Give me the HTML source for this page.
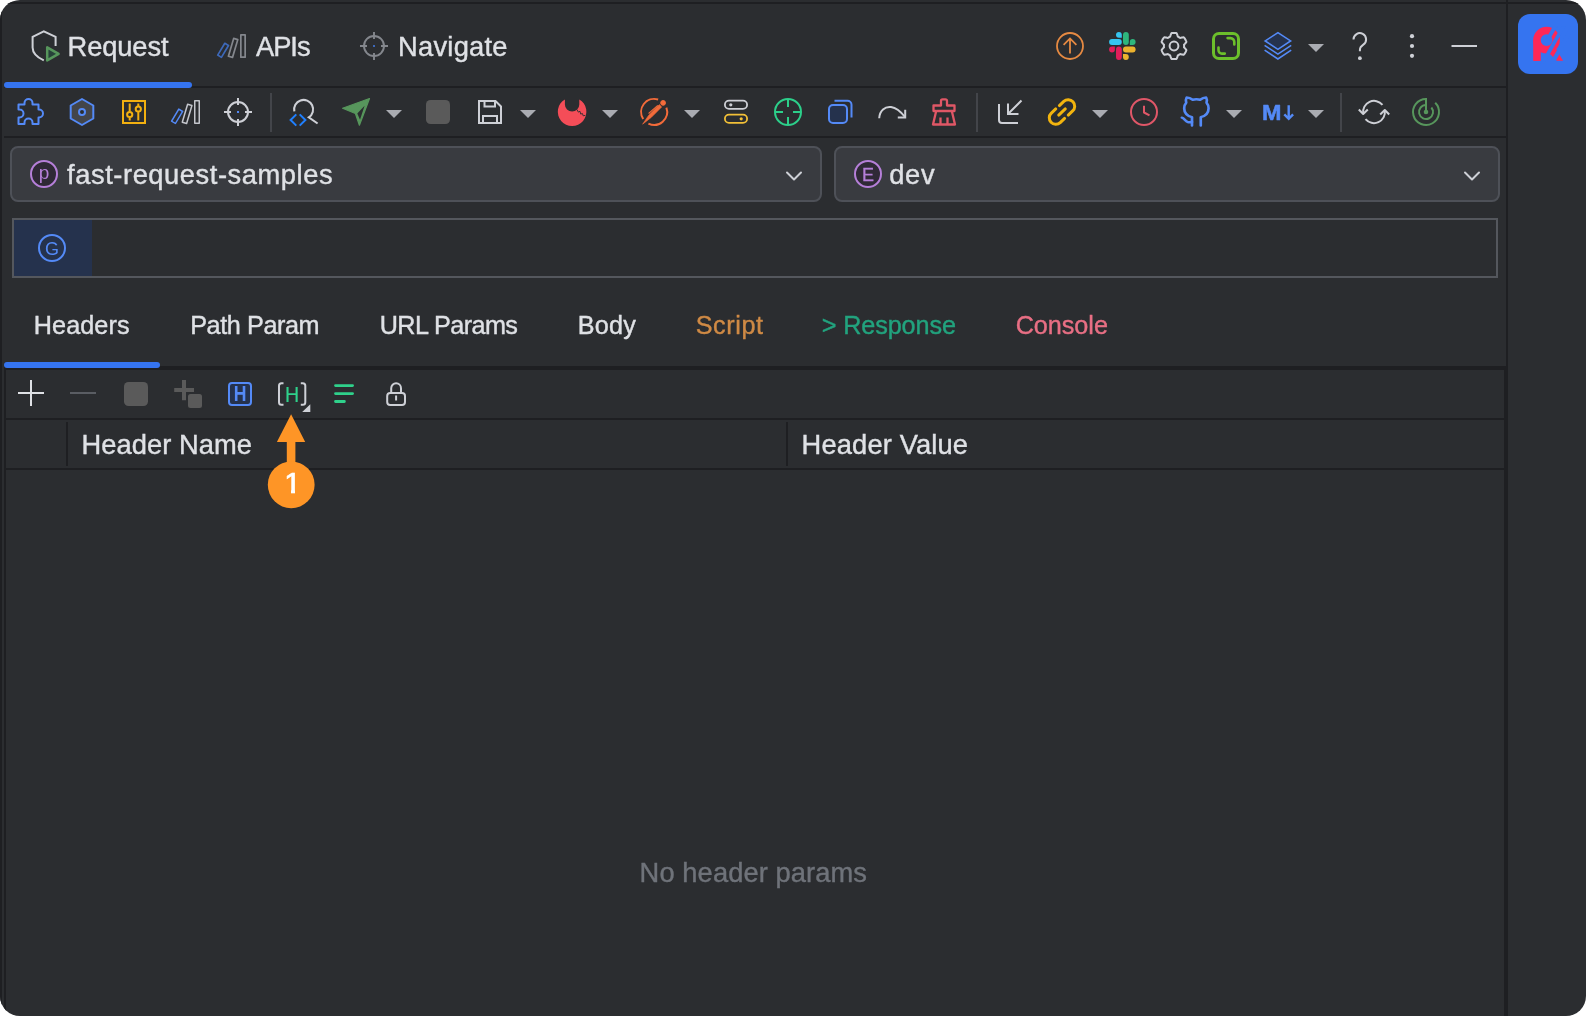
<!DOCTYPE html>
<html><head><meta charset="utf-8"><title>Fast Request</title>
<style>
html,body{margin:0;padding:0;background:#fff;}
body{width:1586px;height:1016px;overflow:hidden;position:relative;font-family:"Liberation Sans",sans-serif;}
#win{position:absolute;left:0;top:0;width:1586px;height:1016px;background:#2b2d30;border-radius:20px;overflow:hidden;}
.abs{position:absolute;}
.dk{position:absolute;background:#1e1f22;}
.t{position:absolute;white-space:nowrap;color:#dfe1e5;line-height:1;-webkit-text-stroke:0.4px currentColor;}
#txt{position:absolute;left:0;top:0;width:1586px;height:1016px;will-change:transform;}
.ic{position:absolute;width:32px;height:32px;overflow:visible;}
.dd{position:absolute;background:#393b40;border:2px solid #4e5158;border-radius:8px;box-sizing:border-box;}
svg{display:block;will-change:transform}
</style></head><body>

<div id="win">
<div class="dk" style="left:0;top:2px;width:1586px;height:2px"></div>
<div class="dk" style="left:0;top:0;width:2px;height:1016px"></div>
<div class="dk" style="left:1506px;top:0;width:2px;height:1016px"></div>
<div class="dk" style="left:4px;top:86px;width:1502px;height:2px"></div>
<div class="abs" style="left:4px;top:82px;width:188px;height:6px;border-radius:3px;background:#3574f0"></div>
<div class="dk" style="left:4px;top:136px;width:1502px;height:2px"></div>
<div class="dk" style="left:4px;top:366px;width:1502px;height:4px"></div>
<div class="abs" style="left:4px;top:362px;width:156px;height:6px;border-radius:3px;background:#3574f0"></div>
<div class="dk" style="left:4px;top:368px;width:2px;height:648px"></div>
<div class="dk" style="left:1504px;top:368px;width:2px;height:648px"></div>
<div class="dk" style="left:6px;top:418px;width:1498px;height:2px"></div>
<div class="dk" style="left:6px;top:468px;width:1498px;height:2px"></div>
<div class="dk" style="left:66px;top:422px;width:2px;height:44px"></div>
<div class="dk" style="left:786px;top:422px;width:2px;height:44px"></div>

<!-- topicons -->
<svg class="abs" style="left:0;top:0" width="1508" height="86" viewBox="0 0 1508 86" fill="none" stroke-linecap="round" stroke-linejoin="round">
<!-- request shield -->
<path d="M55.6 46V36.8L43.8 31.4L32.6 36.8V47.5C32.6 53.5 37.5 57.5 43.8 60.4" stroke="#ced0d6" stroke-width="2" stroke-linecap="butt" stroke-linejoin="miter"/>
<path d="M47.2 47.4V60.4L58.6 53.9Z" stroke="#57965c" stroke-width="2.5" fill="#27423a"/>
<!-- apis (title) -->
<g transform="translate(46 -66)">
<g stroke="#84878d"><rect x="194.85" y="100.85" width="4.3" height="22.3" stroke-width="1.7"/>
<rect x="-2.15" y="-9.3" width="4.3" height="18.6" stroke-width="1.7" transform="translate(187.1 113.9) rotate(16.5)"/></g>
<rect x="-2.15" y="-6.9" width="4.3" height="13.8" stroke="#3d68b8" stroke-width="1.7" transform="translate(177.1 116.3) rotate(31)"/>
</g>
<!-- navigate crosshair (title) -->
<g transform="translate(136 -66)" stroke="#84878d" stroke-width="1.9" stroke-linecap="butt">
<circle cx="238" cy="112" r="10"/>
<path d="M238 98V105M238 119V126M224 112H231M245 112H252"/>
<rect x="237" y="111" width="2" height="2" fill="#3d68b8" stroke="none"/>
</g>
<!-- up circle -->
<g stroke="#e68a42" stroke-width="1.8">
<circle cx="1070" cy="46" r="13"/>
<path d="M1070 53.5V38.8M1063.6 44.8L1070 38.4L1076.4 44.8" stroke-linecap="butt" stroke-linejoin="miter"/>
</g>
<!-- slack -->
<g stroke="none">
<rect x="1109.1" y="39.1" width="12.7" height="5.8" rx="2.9" fill="#36c5f0"/>
<path d="M1118.90 31.90H1118.90a2.90 2.90 0 0 1 2.90 2.90V37.70a0.00 0.00 0 0 1 -0.00 0.00H1118.90a2.90 2.90 0 0 1 -2.90 -2.90V34.80a2.90 2.90 0 0 1 2.90 -2.90Z" fill="#36c5f0"/>
<rect x="1123.0" y="31.9" width="5.8" height="13.0" rx="2.9" fill="#2eb67d"/>
<path d="M1132.70 39.10H1132.70a2.90 2.90 0 0 1 2.90 2.90V42.00a2.90 2.90 0 0 1 -2.90 2.90H1129.80a0.00 0.00 0 0 1 -0.00 -0.00V42.00a2.90 2.90 0 0 1 2.90 -2.90Z" fill="#2eb67d"/>
<rect x="1123.0" y="46.6" width="12.6" height="5.8" rx="2.9" fill="#ecb22e"/>
<path d="M1123.00 54.10H1125.90a2.90 2.90 0 0 1 2.90 2.90V57.00a2.90 2.90 0 0 1 -2.90 2.90H1125.90a2.90 2.90 0 0 1 -2.90 -2.90V54.10a0.00 0.00 0 0 1 0.00 -0.00Z" fill="#ecb22e"/>
<rect x="1116.0" y="46.6" width="5.8" height="13.3" rx="2.9" fill="#e01e5a"/>
<path d="M1112.00 46.60H1114.90a0.00 0.00 0 0 1 0.00 0.00V49.50a2.90 2.90 0 0 1 -2.90 2.90H1112.00a2.90 2.90 0 0 1 -2.90 -2.90V49.50a2.90 2.90 0 0 1 2.90 -2.90Z" fill="#e01e5a"/>
</g>
<!-- gear -->
<g stroke="#ced0d6" stroke-width="2">
<path d="M1174.0 32.9L1174.3 32.9L1174.7 32.9L1175.0 32.9L1175.4 33.0L1175.7 33.0L1176.0 33.1L1176.4 33.1L1176.7 33.3L1176.9 33.8L1177.1 34.3L1177.3 34.8L1177.5 35.3L1177.6 35.8L1177.7 36.2L1177.9 36.7L1178.1 36.8L1178.3 36.9L1178.6 37.0L1178.8 37.1L1179.0 37.3L1179.3 37.4L1179.5 37.5L1179.7 37.7L1179.9 37.8L1180.2 38.0L1180.6 37.9L1181.0 37.8L1181.5 37.6L1182.0 37.5L1182.6 37.4L1183.1 37.3L1183.7 37.3L1184.0 37.5L1184.2 37.8L1184.4 38.0L1184.6 38.3L1184.8 38.6L1185.0 38.9L1185.2 39.2L1185.3 39.5L1185.5 39.7L1185.7 40.1L1185.8 40.4L1186.0 40.7L1186.1 41.0L1186.2 41.3L1186.3 41.6L1186.4 42.0L1186.1 42.4L1185.7 42.9L1185.4 43.3L1185.0 43.7L1184.6 44.0L1184.3 44.4L1184.0 44.7L1184.0 44.9L1184.1 45.2L1184.1 45.5L1184.1 45.7L1184.1 46.0L1184.1 46.3L1184.1 46.5L1184.1 46.8L1184.0 47.1L1184.0 47.3L1184.3 47.6L1184.6 48.0L1185.0 48.3L1185.4 48.7L1185.7 49.1L1186.1 49.6L1186.4 50.0L1186.3 50.4L1186.2 50.7L1186.1 51.0L1186.0 51.3L1185.8 51.6L1185.7 51.9L1185.5 52.3L1185.3 52.5L1185.2 52.8L1185.0 53.1L1184.8 53.4L1184.6 53.7L1184.4 54.0L1184.2 54.2L1184.0 54.5L1183.7 54.7L1183.1 54.7L1182.6 54.6L1182.0 54.5L1181.5 54.4L1181.0 54.2L1180.6 54.1L1180.2 54.0L1179.9 54.2L1179.7 54.3L1179.5 54.5L1179.3 54.6L1179.0 54.7L1178.8 54.9L1178.6 55.0L1178.3 55.1L1178.1 55.2L1177.9 55.3L1177.7 55.8L1177.6 56.2L1177.5 56.7L1177.3 57.2L1177.1 57.7L1176.9 58.2L1176.7 58.7L1176.4 58.9L1176.0 58.9L1175.7 59.0L1175.4 59.0L1175.0 59.1L1174.7 59.1L1174.3 59.1L1174.0 59.1L1173.7 59.1L1173.3 59.1L1173.0 59.1L1172.6 59.0L1172.3 59.0L1172.0 58.9L1171.6 58.9L1171.3 58.7L1171.1 58.2L1170.9 57.7L1170.7 57.2L1170.5 56.7L1170.4 56.2L1170.3 55.8L1170.1 55.3L1169.9 55.2L1169.7 55.1L1169.4 55.0L1169.2 54.9L1169.0 54.7L1168.7 54.6L1168.5 54.5L1168.3 54.3L1168.1 54.2L1167.8 54.0L1167.4 54.1L1167.0 54.2L1166.5 54.4L1166.0 54.5L1165.4 54.6L1164.9 54.7L1164.3 54.7L1164.0 54.5L1163.8 54.2L1163.6 54.0L1163.4 53.7L1163.2 53.4L1163.0 53.1L1162.8 52.8L1162.7 52.6L1162.5 52.3L1162.3 51.9L1162.2 51.6L1162.0 51.3L1161.9 51.0L1161.8 50.7L1161.7 50.4L1161.6 50.0L1161.9 49.6L1162.3 49.1L1162.6 48.7L1163.0 48.3L1163.4 48.0L1163.7 47.6L1164.0 47.3L1164.0 47.1L1163.9 46.8L1163.9 46.5L1163.9 46.3L1163.9 46.0L1163.9 45.7L1163.9 45.5L1163.9 45.2L1164.0 44.9L1164.0 44.7L1163.7 44.4L1163.4 44.0L1163.0 43.7L1162.6 43.3L1162.3 42.9L1161.9 42.4L1161.6 42.0L1161.7 41.6L1161.8 41.3L1161.9 41.0L1162.0 40.7L1162.2 40.4L1162.3 40.1L1162.5 39.7L1162.7 39.4L1162.8 39.2L1163.0 38.9L1163.2 38.6L1163.4 38.3L1163.6 38.0L1163.8 37.8L1164.0 37.5L1164.3 37.3L1164.9 37.3L1165.4 37.4L1166.0 37.5L1166.5 37.6L1167.0 37.8L1167.4 37.9L1167.8 38.0L1168.1 37.8L1168.3 37.7L1168.5 37.5L1168.7 37.4L1169.0 37.3L1169.2 37.1L1169.4 37.0L1169.7 36.9L1169.9 36.8L1170.1 36.7L1170.3 36.2L1170.4 35.8L1170.5 35.3L1170.7 34.8L1170.9 34.3L1171.1 33.8L1171.3 33.3L1171.6 33.1L1172.0 33.1L1172.3 33.0L1172.6 33.0L1173.0 32.9L1173.3 32.9L1173.7 32.9Z"/>
<circle cx="1174" cy="46" r="4.4"/>
</g>
<!-- expand -->
<rect x="1213.5" y="33.5" width="25" height="25" rx="5.5" stroke="#6cbf2b" stroke-width="3"/>
<path d="M1227.6 38.1H1230.4a3.9 3.9 0 0 1 3.9 3.9V44.4M1218.5 47.6V50.2a3.4 3.4 0 0 0 3.4 3.4H1224.8" stroke="#6cbf2b" stroke-width="2.6" stroke-linecap="round"/>
<!-- layers -->
<g stroke="#548af7" stroke-width="1.6" stroke-linejoin="miter" stroke-linecap="butt">
<path d="M1277.9 32.6L1290.6 40.9L1277.9 49.3L1265.2 40.9Z" fill="#25324d"/>
<path d="M1264.6 45.3L1277.9 54.1L1291.2 45.3M1264.6 50.2L1277.9 59L1291.2 50.2"/>
</g>
<path d="M1308 44H1324L1316 52Z" fill="#aaacb2"/>
<!-- help -->
<path d="M1353.5 39.5a6.3 6.3 0 1 1 9.8 5.2c-2 1.4 -3.4 2.8 -3.4 5.2V51.2" stroke="#ced0d6" stroke-width="2" stroke-linecap="butt"/>
<circle cx="1359.9" cy="58.2" r="1.9" fill="#ced0d6"/>
<!-- more -->
<circle cx="1412" cy="36.2" r="2.1" fill="#ced0d6"/><circle cx="1412" cy="46" r="2.1" fill="#ced0d6"/><circle cx="1412" cy="55.8" r="2.1" fill="#ced0d6"/>
<!-- minimize -->
<rect x="1451.5" y="45" width="25.5" height="2" fill="#ced0d6"/>
</svg>

<!-- toolbar1 -->
<svg class="abs" style="left:0;top:0" width="1508" height="140" viewBox="0 0 1508 140" fill="none" stroke-linecap="round" stroke-linejoin="round">
<defs>
<path id="dda" d="M-8 -4 H8 L0 4 Z" fill="#aaacb2" stroke="none"/>
<g id="apisbars">
<rect x="194.75" y="100.75" width="4.5" height="22.5" stroke-width="1.5"/>
<rect x="-2.25" y="-9.4" width="4.5" height="18.8" stroke-width="1.5" transform="translate(187.1 113.9) rotate(16.5)"/>
</g>
<g id="xhair" stroke-width="2" stroke-linecap="butt">
<circle cx="238" cy="112" r="10"/>
<path d="M238 98V105M238 119V126M224 112H231M245 112H252"/>
</g>
</defs>
<!-- separators -->
<g stroke="none" fill="#43454a">
<rect x="270" y="93" width="2" height="39"/><rect x="976" y="93" width="2" height="39"/><rect x="1340" y="93" width="2" height="39"/>
</g>
<!-- puzzle -->
<path d="M18.5 104.5H24.5V103a4 4 0 0 1 8 0V104.5H38.5V109.5H39a4 4 0 0 1 0 8H38.5V124H32.5V122.5a4 4 0 0 0-8 0V124H18.5V117.5H19.5a4 4 0 0 0 0-8H18.5Z" stroke="#548af7" stroke-width="2"/>
<!-- hexagon -->
<path d="M82 99L93.3 105.5V118.5L82 125L70.7 118.5V105.5Z" stroke="#548af7" stroke-width="2" fill="#43454a"/>
<circle cx="82" cy="112" r="3" stroke="#548af7" stroke-width="2" fill="#2b2d30"/>
<!-- sliders -->
<g stroke="#f2b010" stroke-width="2" stroke-linecap="butt">
<rect x="123" y="101" width="22" height="22" stroke-linejoin="miter"/>
<path d="M129.7 103.5V111.5M129.7 117.5V120.5M138.3 103.5V106M138.3 112V120.5"/>
<circle cx="129.7" cy="114.5" r="2.6"/><circle cx="138.3" cy="109" r="2.6"/>
</g>
<!-- apis bars -->
<use href="#apisbars" stroke="#c4c6cc"/>
<rect x="-2.25" y="-7" width="4.5" height="14" stroke="#548af7" stroke-width="1.5" transform="translate(177.1 116.3) rotate(31)"/>
<!-- crosshair -->
<use href="#xhair" stroke="#ced0d6"/>
<rect x="237" y="111" width="2" height="2" fill="#548af7"/>
<!-- search code -->
<path d="M294.31 111.38A9.5 9.5 0 1 1 308.77 117.37L317.6 123.5" stroke="#ced0d6" stroke-width="2.1" stroke-linecap="butt" stroke-linejoin="miter"/>
<path d="M296.3 114.4L290.6 120L296.3 125.6M299.7 114.4L305.4 120L299.7 125.6" stroke="#2080ff" stroke-width="2" stroke-linecap="butt" stroke-linejoin="miter"/>
<!-- send -->
<path d="M369.5 98.5L342.6 108.3L355.4 113.5L359.4 125.2Z" fill="#57965c" stroke="#57965c" stroke-width="1.2" />
<path d="M364.6 105.8L357.3 113.4L360 119.8Z" fill="#2b2d30" stroke="none"/>
<use href="#dda" x="394" y="114"/>
<!-- stop -->
<rect x="426" y="100" width="24" height="24" rx="4.5" fill="#5a5a5a"/>
<!-- save -->
<g stroke="#ced0d6" stroke-width="2" stroke-linecap="butt" stroke-linejoin="miter">
<path d="M479 101H495.5L501 106.5V123H479Z"/>
<path d="M484.5 101V106.5H495V101M483 123V116H497V123"/>
</g>
<use href="#dda" x="528" y="114"/>
<!-- apifox -->
<path d="M564.9 99.5A14.3 14.3 0 1 0 579.3 99.5V104.5A7.2 7.2 0 0 1 564.9 104.5Z" fill="#f44d58" transform="translate(0 -0.1)"/>
<path d="M577 109.6L578.3 112.1L580 111.3L580.7 114.1L582.4 113.5L583.2 115.8L585.4 115.3" stroke="#2b2d30" stroke-width="0.9" stroke-linejoin="miter" stroke-linecap="butt"/>
<use href="#dda" x="610" y="114"/>
<!-- postman -->
<g stroke="#f26b3a" stroke-linecap="butt">
<path d="M658.12 99.54A13 13 0 0 0 643.20 118.98" stroke-width="2"/>
<path d="M666.39 107.67A13 13 0 0 1 648.40 123.58" stroke-width="2"/>
<circle cx="663.1" cy="102.9" r="2.4" fill="#f26b3a" stroke-width="1"/>
<path d="M661.7 106.9L659.3 104.6L648.6 115.4L642.6 124.2L651.4 117.3Z" fill="#f26b3a" stroke-width="0.6" stroke-linejoin="round"/>
<path d="M657.8 105.3L648.6 113.5" stroke-width="1.1"/>
</g>
<use href="#dda" x="692" y="114"/>
<!-- toggles -->
<rect x="724.9" y="100.7" width="22.2" height="8.2" rx="4.1" stroke="#ced0d6" stroke-width="1.8"/>
<circle cx="730.8" cy="104.8" r="1.6" fill="#ced0d6"/>
<rect x="724.9" y="114.7" width="22.2" height="8.2" rx="4.1" stroke="#f2c037" stroke-width="1.8"/>
<circle cx="741.2" cy="118.8" r="1.6" fill="#f2c037"/>
<!-- green crosshair -->
<g stroke="#2ccf8a" stroke-width="2" stroke-linecap="butt">
<circle cx="788" cy="112" r="13"/>
<path d="M788 99V107M788 117V125M775 112H783M793 112H801"/>
</g>
<!-- copy -->
<path d="M834.5 100.8H847.5a4 4 0 0 1 4 4V117.5" stroke="#548af7" stroke-width="2" stroke-linecap="butt"/>
<rect x="829" y="105" width="18" height="18" rx="4" stroke="#548af7" stroke-width="2" fill="#25324d"/>
<!-- redo -->
<path d="M879.2 118.2C879.6 110.5 885 106.2 891 107C897 107.8 901.5 112.5 905 117" stroke="#ced0d6" stroke-width="2" stroke-linecap="butt"/>
<path d="M905.2 109.8V117.4H897.8" stroke="#ced0d6" stroke-width="2" stroke-linecap="butt" stroke-linejoin="miter"/>
<!-- brush -->
<g stroke="#e05766" stroke-width="2.3" stroke-linejoin="round">
<path d="M941 105.5V100.8a1.5 1.5 0 0 1 1.5 -1.5H945.5a1.5 1.5 0 0 1 1.5 1.5V105.5H954.5V111H951.8L955 124.5H933L936.2 111H933.5V105.5Z"/>
<path d="M936.5 111H951.5M940.5 117.5V124M947.5 117.5V124" stroke-linecap="butt"/>
</g>
<!-- import -->
<g stroke="#ced0d6" stroke-width="2" stroke-linecap="butt" stroke-linejoin="miter">
<path d="M999 104V120a3 3 0 0 0 3 3H1018"/>
<path d="M1021.5 100.5L1008.5 113.5M1008 103.5V114H1018.5"/>
</g>
<!-- link -->
<g stroke="#f2b40e" stroke-width="3" transform="translate(1062 112) rotate(-43)">
<path d="M-2.5 -6.5H-8.5a6.5 6.5 0 0 0 0 13H-2.5"/>
<path d="M2.5 -6.5H8.5a6.5 6.5 0 0 1 0 13H2.5"/>
<path d="M-4.5 0H4.5"/>
</g>
<use href="#dda" x="1100" y="114"/>
<!-- clock -->
<circle cx="1144" cy="112" r="13" stroke="#e05768" stroke-width="2"/>
<path d="M1144 105.8V112.5L1149.5 115.3" stroke="#e05768" stroke-width="2" stroke-linecap="butt"/>
<!-- github -->
<g stroke="#548af7" stroke-width="2.5" transform="translate(1196.6 126) scale(1.07 0.965) translate(-1196.6 -126)">
<path d="M1192.3 125.5V116.8C1188 115.5 1185 112 1185 107.5c0-2.4 0.7-4.2 1.9-5.7c-0.5-1.6-0.4-3.7 0.4-5.3c2.2 0 4 0.9 5.6 2.3c1.1-0.4 2.3-0.5 3.5-0.5s2.4 0.1 3.5 0.5c1.6-1.4 3.4-2.3 5.6-2.3c0.8 1.6 0.9 3.7 0.4 5.3c1.2 1.5 1.9 3.3 1.9 5.7c0 4.5-3 8-7.3 9.3V125.5"/>
<path d="M1182.8 117.3c2.5 0.6 3 4 5.5 4.6c1.4 0.3 2.6 0.2 4 0"/>
</g>
<use href="#dda" x="1234" y="114"/>
<!-- M down -->
<text x="1262" y="119.6" font-family="Liberation Sans, sans-serif" font-weight="bold" font-size="21.2" fill="#548af7" stroke="#548af7" stroke-width="0.5" transform="translate(1262 0) scale(1.1 1) translate(-1262 0)">M</text>
<path d="M1288.7 105.2V118M1284.3 114.3L1288.7 118.8L1293.1 114.3" stroke="#548af7" stroke-width="2.4" stroke-linecap="butt" stroke-linejoin="miter"/>
<use href="#dda" x="1316" y="114"/>
<!-- sync -->
<g stroke="#ced0d6" stroke-width="2" stroke-linecap="butt">
<path d="M1363.2 113.5A11 11 0 0 1 1382.5 104.8"/>
<path d="M1384.8 110.5A11 11 0 0 1 1365.5 119.2"/>
<path d="M1358.8 109.5L1363.2 114L1367.8 109.5"/>
<path d="M1380.2 114.5L1384.8 110L1389.2 114.5"/>
</g>
<!-- power -->
<g stroke="#57965c" stroke-width="2" stroke-linecap="butt">
<path d="M1426 99A13 13 0 1 0 1435.2 102.8"/>
<path d="M1426 105A7 7 0 1 0 1431.4 107.5"/>
<path d="M1426 98V112"/>
<circle cx="1426" cy="112" r="1.3" fill="#57965c"/>
</g>
</svg>

<!-- dropdowns -->
<div class="dd" style="left:10px;top:146px;width:812px;height:56px"></div>
<div class="dd" style="left:834px;top:146px;width:666px;height:56px"></div>
<svg class="abs" style="left:784px;top:166px" width="20" height="20" viewBox="0 0 20 20"><path d="M3 6.5 L10 13.5 L17 6.5" fill="none" stroke="#ced0d6" stroke-width="2" stroke-linecap="round" stroke-linejoin="round"/></svg>
<svg class="abs" style="left:1462px;top:166px" width="20" height="20" viewBox="0 0 20 20"><path d="M3 6.5 L10 13.5 L17 6.5" fill="none" stroke="#ced0d6" stroke-width="2" stroke-linecap="round" stroke-linejoin="round"/></svg>
<!-- P circle -->
<svg class="abs" style="left:28px;top:158px" width="32" height="32" viewBox="0 0 32 32"><circle cx="16" cy="16" r="13" fill="#2f2936" stroke="#b57fd8" stroke-width="2"/><text x="16" y="20.5" text-anchor="middle" font-family="Liberation Sans, sans-serif" font-size="19" fill="#b57fd8">p</text></svg>
<!-- E circle -->
<svg class="abs" style="left:852px;top:158px" width="32" height="32" viewBox="0 0 32 32"><circle cx="16" cy="16" r="13" fill="#2f2936" stroke="#b57fd8" stroke-width="2"/><text x="16" y="22.5" text-anchor="middle" font-family="Liberation Sans, sans-serif" font-size="18" fill="#b57fd8" stroke="#b57fd8" stroke-width="0.3">E</text></svg>
<!-- URL box -->
<div class="abs" style="left:12px;top:218px;width:1486px;height:60px;box-sizing:border-box;border:2px solid #54575d;background:#2b2d30"></div>
<div class="abs" style="left:14px;top:220px;width:78px;height:56px;background:#25324d"></div>
<svg class="abs" style="left:36px;top:232px" width="32" height="32" viewBox="0 0 32 32"><circle cx="16" cy="16" r="13" fill="none" stroke="#548af7" stroke-width="2"/><text x="16" y="22.5" text-anchor="middle" font-family="Liberation Sans, sans-serif" font-size="18" fill="#548af7">G</text></svg>

<!-- tabs -->

<!-- toolbar2 -->
<svg class="abs" style="left:0;top:370px" width="440" height="48" viewBox="0 370 440 48" fill="none" stroke-linecap="round" stroke-linejoin="round">
<!-- plus -->
<path d="M31 380V406M18 393H44" stroke="#dfe1e5" stroke-width="2" stroke-linecap="butt"/>
<!-- minus -->
<rect x="70" y="392" width="26" height="2" fill="#5a5d63"/>
<!-- square -->
<rect x="124" y="382" width="24" height="24" rx="4.5" fill="#5a5a5a"/>
<!-- plus-square -->
<path d="M184 380V400.2M174.2 390H194" stroke="#5a5a5a" stroke-width="4" stroke-linecap="butt"/>
<rect x="187" y="393" width="16" height="16" rx="3.5" fill="#5a5a5a" stroke="#2b2d30" stroke-width="2"/>
<!-- H box -->
<rect x="229" y="383" width="22" height="22" rx="3" stroke="#548af7" stroke-width="2" fill="#25324d"/>
<text x="240" y="401.4" text-anchor="middle" font-family="Liberation Sans, sans-serif" font-weight="bold" font-size="22" fill="#548af7" transform="translate(240 0) scale(0.8 1) translate(-240 0)">H</text>
<!-- [H] -->
<path d="M283.5 383.2H281.5a2.5 2.5 0 0 0-2.5 2.5V402.3a2.5 2.5 0 0 0 2.5 2.5H283.5M300.8 383.2H302.8a2.5 2.5 0 0 1 2.5 2.5V402.3a2.5 2.5 0 0 1-2.5 2.5H300.8" stroke="#ced0d6" stroke-width="2" stroke-linecap="butt"/>
<text x="292.2" y="401.6" text-anchor="middle" font-family="Liberation Sans, sans-serif" font-size="22.8" fill="#2fd18b" stroke="#2fd18b" stroke-width="0.2" transform="translate(292.2 0) scale(0.86 1) translate(-292.2 0)">H</text>
<path d="M310.3 404.2V412.1H302.2Z" fill="#ced0d6"/>
<!-- lines -->
<path d="M335.5 385.6H352.6M335.5 393.6H352.6M335.5 401.5H344.4" stroke="#2fd18b" stroke-width="2.8"/>
<!-- lock -->
<rect x="387.2" y="392.9" width="17.8" height="12" rx="3" stroke="#ced0d6" stroke-width="2"/>
<path d="M391.2 392.5V388.2a4.9 4.9 0 0 1 9.8 0V392.5M396.1 395.6V400.6" stroke="#ced0d6" stroke-width="2" stroke-linecap="butt"/>
</svg>

<!-- sidebar -->
<svg class="abs" style="left:1510px;top:8px" width="76" height="72" viewBox="1510 8 76 72">
<rect x="1518" y="14" width="60" height="60" rx="12" fill="#3574f0"/>
<g transform="translate(1528 22) scale(0.04329)">
<path d="M120 418A308 308 0 0 1 736 418A308 308 0 0 1 120 418ZM291 418A137 137 0 0 0 565 418A137 137 0 0 0 291 418Z" fill="#fe2857" fill-rule="evenodd"/>
<rect x="120" y="418" width="175" height="482" fill="#fe2857"/>
<path d="M600 538L810 895H665L410 640Z" fill="#fe2857"/>
<g fill="#3574f0">
<path d="M578 100H683L502 418H397Z"/>
<path d="M771 100H870L386 950H287Z"/>
<path d="M982 100H1094L610 950H498Z"/>
</g>
</g>
</svg>

<!-- text -->
<div id="txt">
<div class="t" style="left:67.6px;top:32.9px;font-size:27.3px;letter-spacing:-0.12px;color:#dfe1e5">Request</div>
<div class="t" style="left:256.0px;top:32.9px;font-size:27.3px;letter-spacing:-1.03px;color:#dfe1e5">APIs</div>
<div class="t" style="left:398.1px;top:32.9px;font-size:27.3px;letter-spacing:0.24px;color:#dfe1e5">Navigate</div>
<div class="t" style="left:67.1px;top:160.9px;font-size:27.3px;letter-spacing:0.56px;color:#dfe1e5">fast-request-samples</div>
<div class="t" style="left:889.3px;top:160.9px;font-size:27.3px;letter-spacing:0.62px;color:#dfe1e5">dev</div>
<div class="t" style="left:33.8px;top:312.7px;font-size:25.2px;letter-spacing:0.09px;color:#dfe1e5">Headers</div>
<div class="t" style="left:190.2px;top:312.7px;font-size:25.2px;letter-spacing:-0.40px;color:#dfe1e5">Path Param</div>
<div class="t" style="left:379.7px;top:312.7px;font-size:25.2px;letter-spacing:-0.55px;color:#dfe1e5">URL Params</div>
<div class="t" style="left:577.7px;top:312.7px;font-size:25.2px;letter-spacing:0.28px;color:#dfe1e5">Body</div>
<div class="t" style="left:695.7px;top:312.7px;font-size:25.2px;letter-spacing:0.58px;color:#cf8a45">Script</div>
<div class="t" style="left:821.7px;top:312.7px;font-size:25.2px;letter-spacing:-0.10px;color:#22a37e">&gt; Response</div>
<div class="t" style="left:1015.7px;top:312.7px;font-size:25.2px;letter-spacing:-0.03px;color:#e86f84">Console</div>
<div class="t" style="left:81.6px;top:430.9px;font-size:27.3px;letter-spacing:0.05px;color:#dfe1e5">Header Name</div>
<div class="t" style="left:801.6px;top:430.9px;font-size:27.3px;letter-spacing:0.14px;color:#dfe1e5">Header Value</div>
<div class="t" style="left:639.6px;top:858.9px;font-size:27.3px;letter-spacing:0.09px;color:#6f737a">No header params</div>
</div>
<!-- annot -->
<svg class="abs" style="left:260px;top:410px" width="64" height="104" viewBox="260 410 64 104">
<defs><clipPath id="c1"><path d="M278 465H302V489.2H295V497H291V489.2H278Z"/></clipPath></defs>
<path d="M291.1 414.2L305.2 441.9H295.4V465H286.8V441.9H276.9Z" fill="#fe9526"/>
<circle cx="291.2" cy="484.8" r="23.4" fill="#fe9526"/>
<text x="292.6" y="493.3" text-anchor="middle" font-family="Liberation Sans, sans-serif" font-size="30" fill="#ffffff" stroke="#ffffff" stroke-width="0.7" clip-path="url(#c1)">1</text>
</svg>

</div>
</body></html>
